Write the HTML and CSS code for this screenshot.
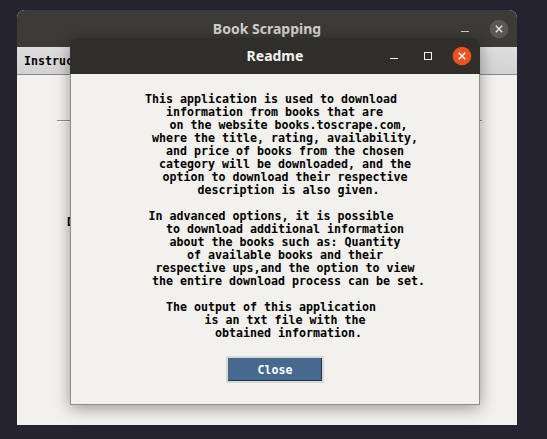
FILE: index.html
```html
<!DOCTYPE html>
<html>
<head>
<meta charset="utf-8">
<link rel="stylesheet" href="styles.css">
</head>
<body>
<div class="win main">
  <div class="titlebar">
    <span class="title">Book Scrapping</span>
    <div class="controls">
      <svg class="ctl" width="20" height="20" viewBox="0 0 20 20"><path d="M6 12.5h8" stroke="#cfcecb" stroke-width="1"/></svg>
      <svg class="ctl" width="20" height="20" viewBox="0 0 20 20"><circle cx="10" cy="10" r="9.3" fill="#5a5955"/><path d="M6.8 6.8l6.4 6.4M13.2 6.8l-6.4 6.4" stroke="#e6e6e4" stroke-width="1.4"/></svg>
    </div>
  </div>
  <div class="menubar"><span class="tab">Instructions</span></div>
  <div class="main-body">
    <div class="sep"></div>
    <div class="label">D</div>
  </div>
</div>

<div class="win dialog">
  <div class="titlebar">
    <span class="title">Readme</span>
    <div class="controls">
      <svg class="ctl" width="20" height="20" viewBox="0 0 20 20"><path d="M6 12.5h8" stroke="#f2f2f2" stroke-width="1"/></svg>
      <svg class="ctl" width="20" height="20" viewBox="0 0 20 20"><rect x="6.5" y="6.5" width="7" height="7" fill="none" stroke="#f2f2f2" stroke-width="1"/></svg>
      <svg class="ctl" width="20" height="20" viewBox="0 0 20 20"><circle cx="10" cy="10" r="9.3" fill="#e95420"/><path d="M6.8 6.8l6.4 6.4M13.2 6.8l-6.4 6.4" stroke="#ffffff" stroke-width="1.4"/></svg>
    </div>
  </div>
  <div class="dialog-body">
<pre class="readme">This application is used to download
 information from books that are
     on the website books.toscrape.com,
    where the title, rating, availability,
    and price of books from the chosen
    category will be downloaded, and the
    option to download their respective
     description is also given.

In advanced options, it is possible
    to download additional information
    about the books such as: Quantity
    of available books and their
    respective ups,and the option to view
     the entire download process can be set.

The output of this application
    is an txt file with the
     obtained information.</pre>
    <button class="btn">Close</button>
  </div>
</div>
</body>
</html>
```

FILE: styles.css
```css
html, body {
  margin: 0;
  padding: 0;
}

body {
  width: 547px;
  height: 439px;
  background: #25232f;
  position: relative;
  overflow: hidden;
  font-family: "DejaVu Sans Mono", "Liberation Mono", monospace;
}

.win {
  position: absolute;
  display: flex;
  flex-direction: column;
}

.titlebar {
  display: grid;
  grid-template-columns: 1fr auto 1fr;
  align-items: center;
  flex: none;
}

.title {
  grid-column: 2;
  font-family: "Noto Sans", "DejaVu Sans", sans-serif;
  font-weight: bold;
  font-size: 14px;
  line-height: 1;
}

.controls {
  grid-column: 3;
  justify-self: end;
  display: flex;
  align-items: center;
  gap: 14px;
}

.ctl {
  display: block;
}

/* main window */
.main {
  left: 17px;
  top: 10px;
  width: 500px;
  height: 415px;
  background: #f2f1ed;
  border-radius: 8px 8px 0 0;
  overflow: hidden;
}

.main .titlebar {
  height: 37px;
  background: #3c3b37;
}

.main .title {
  color: #d2d1ce;
}

.main .controls {
  padding-right: 8px;
}

.menubar {
  height: 27px;
  background: linear-gradient(#dedede, #d2d2d2);
  border-bottom: 1px solid #878787;
  display: flex;
  align-items: center;
  flex: none;
}

.tab {
  padding-left: 7px;
  font-weight: bold;
  font-size: 11.63px;
  color: #000;
}

.main-body {
  flex: 1;
  display: flex;
  flex-direction: column;
  padding-left: 40px;
}

.sep {
  margin-top: 45px;
  width: 425px;
  height: 1px;
  border-bottom: 1px solid #ffffff;
  background: #8e8e8c;
}

.label {
  margin-top: 94px;
  padding-left: 10px;
  font-weight: bold;
  font-size: 11.63px;
  line-height: 13px;
  color: #000;
}

/* dialog */
.dialog {
  left: 70px;
  top: 38px;
  width: 410px;
  height: 367px;
  box-shadow: 0 3px 16px rgba(0, 0, 0, 0.38);
  border-radius: 7px 7px 0 0;
}

.dialog .titlebar {
  height: 36px;
  background: #2f2e2b;
  border-radius: 7px 7px 0 0;
}

.dialog .title {
  color: #f3f3f3;
}

.dialog .controls {
  padding-right: 8px;
}

.dialog-body {
  flex: 1;
  background: #f2f1ed;
  border: 1px solid #8f8e8a;
  border-top: none;
  display: flex;
  flex-direction: column;
  align-items: center;
}

.readme {
  margin: 19px 0 0 0;
  align-self: stretch;
  padding-right: 8px;
  white-space: pre;
  text-align: center;
  font-family: "DejaVu Sans Mono", "Liberation Mono", monospace;
  font-weight: bold;
  font-size: 11.63px;
  line-height: 13px;
  color: #000;
}

.btn {
  margin-top: 16px;
  width: 98px;
  height: 27px;
  box-sizing: border-box;
  border: 2px solid #d8d8d5;
  background: #476990;
  box-shadow: inset -1px -1px 0 #22374f;
  color: #ffffff;
  font-family: "DejaVu Sans Mono", "Liberation Mono", monospace;
  font-weight: bold;
  font-size: 11.63px;
  padding: 0;
}
```
